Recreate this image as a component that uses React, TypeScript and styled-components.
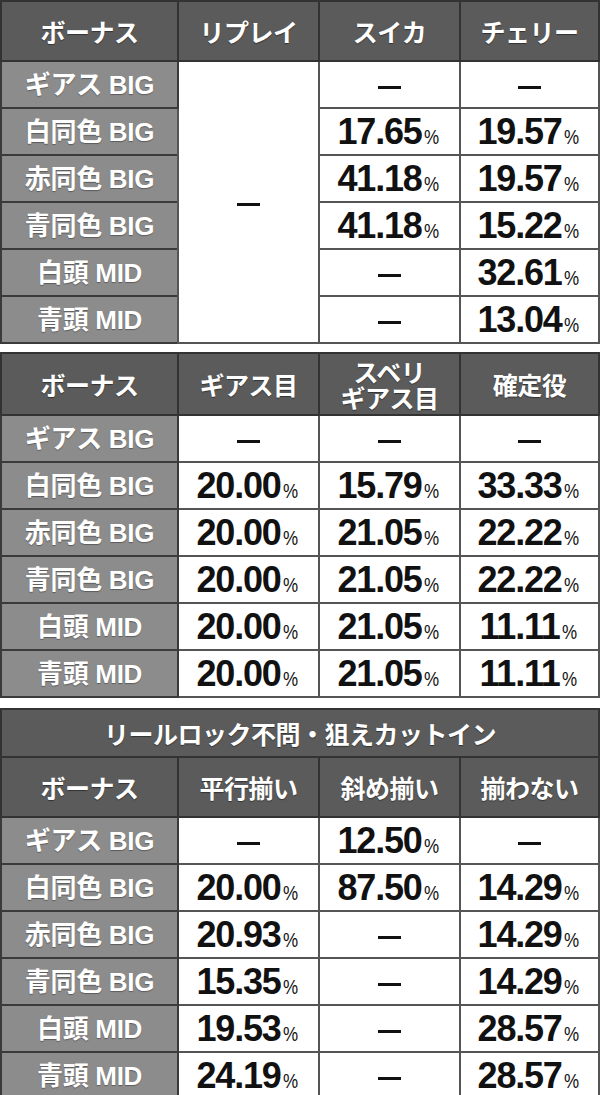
import React from 'react';
import styled, { createGlobalStyle } from 'styled-components';

const GlobalStyle = createGlobalStyle`
  html, body { margin:0; padding:0; background:#fff; }
  body { font-family:"Noto Sans CJK JP", "Noto Sans", sans-serif; }
`;

const Page = styled.div`
  width:598px;
  display:flex;
  flex-direction:column;
`;

const Table = styled.table<{ gap?: number }>`
  width:598px;
  border-collapse:collapse;
  table-layout:fixed;
  margin-top:${({ gap }) => gap ?? 0}px;
`;

const Row = styled.tr<{ h: number }>`
  height:${({ h }) => h}px;
`;

const HeadCell = styled.th`
  background:#5b5b5b;
  color:#fff;
  border:2px solid #333;
  font:700 25px/26px "Noto Sans CJK JP", sans-serif;
  letter-spacing:-0.5px;
  text-align:center;
  padding:0;
  text-shadow:0 1px 1px rgba(0,0,0,.45);
  white-space:pre-line;
`;

const LabelCell = styled.td`
  background:#8c8c8c;
  color:#fff;
  border:2px solid #3a3a3a;
  font:700 26px/1 "Liberation Sans", "Noto Sans CJK JP", sans-serif;
  letter-spacing:-0.3px;
  text-align:center;
  padding:0;
  text-shadow:0 1px 1px rgba(0,0,0,.35);
`;

const ValueCell = styled.td`
  background:#fff;
  color:#111;
  border:2px solid #555;
  text-align:center;
  padding:0;
`;

const Num = styled.span`
  font:700 36px/1 "Liberation Sans", Arial, sans-serif;
  letter-spacing:-1.2px;
`;

const Pct = styled.span`
  font:400 20px/1 "Liberation Sans", Arial, sans-serif;
  margin-left:2px;
  display:inline-block;
  transform:scaleX(0.85);
  transform-origin:left center;
`;

const Dash = styled.span`
  display:inline-block;
  width:23px;
  height:3px;
  background:#111;
  vertical-align:middle;
`;

type Val = string | null;

const Value: React.FC<{ v: Val }> = ({ v }) => (
  <ValueCell>
    {v === null ? <Dash /> : (<><Num>{v}</Num><Pct>%</Pct></>)}
  </ValueCell>
);

const labels = ['ギアス BIG', '白同色 BIG', '赤同色 BIG', '青同色 BIG', '白頭 MID', '青頭 MID'];

const t1: Val[][] = [
  [null, null],
  ['17.65', '19.57'],
  ['41.18', '19.57'],
  ['41.18', '15.22'],
  [null, '32.61'],
  [null, '13.04'],
];

const t2: Val[][] = [
  [null, null, null],
  ['20.00', '15.79', '33.33'],
  ['20.00', '21.05', '22.22'],
  ['20.00', '21.05', '22.22'],
  ['20.00', '21.05', '11.11'],
  ['20.00', '21.05', '11.11'],
];

const t3: Val[][] = [
  [null, '12.50', null],
  ['20.00', '87.50', '14.29'],
  ['20.93', null, '14.29'],
  ['15.35', null, '14.29'],
  ['19.53', null, '28.57'],
  ['24.19', null, '28.57'],
];

const Cols = () => (
  <colgroup>
    <col style={{ width: 177 }} />
    <col style={{ width: 141 }} />
    <col style={{ width: 141 }} />
    <col style={{ width: 139 }} />
  </colgroup>
);

const Head: React.FC<{ titles: string[]; h: number }> = ({ titles, h }) => (
  <Row h={h}>
    {titles.map((t) => <HeadCell key={t}>{t}</HeadCell>)}
  </Row>
);

const App: React.FC = () => (
  <Page>
    <GlobalStyle />
    <Table>
      <Cols />
      <tbody>
        <Head titles={['ボーナス', 'リプレイ', 'スイカ', 'チェリー']} h={60} />
        {t1.map((r, i) => (
          <Row h={47} key={labels[i]}>
            <LabelCell>{labels[i]}</LabelCell>
            {i === 0 && <ValueCell rowSpan={6}><Dash /></ValueCell>}
            {r.map((v, j) => <Value key={j} v={v} />)}
          </Row>
        ))}
      </tbody>
    </Table>

    <Table gap={8}>
      <Cols />
      <tbody>
        <Head titles={['ボーナス', 'ギアス目', 'スベリ\nギアス目', '確定役']} h={62} />
        {t2.map((r, i) => (
          <Row h={47} key={labels[i]}>
            <LabelCell>{labels[i]}</LabelCell>
            {r.map((v, j) => <Value key={j} v={v} />)}
          </Row>
        ))}
      </tbody>
    </Table>

    <Table gap={10}>
      <Cols />
      <tbody>
        <Row h={48}>
          <HeadCell colSpan={4}>リールロック不問・狙えカットイン</HeadCell>
        </Row>
        <Head titles={['ボーナス', '平行揃い', '斜め揃い', '揃わない']} h={60} />
        {t3.map((r, i) => (
          <Row h={47} key={labels[i]}>
            <LabelCell>{labels[i]}</LabelCell>
            {r.map((v, j) => <Value key={j} v={v} />)}
          </Row>
        ))}
      </tbody>
    </Table>
  </Page>
);

export default App;
